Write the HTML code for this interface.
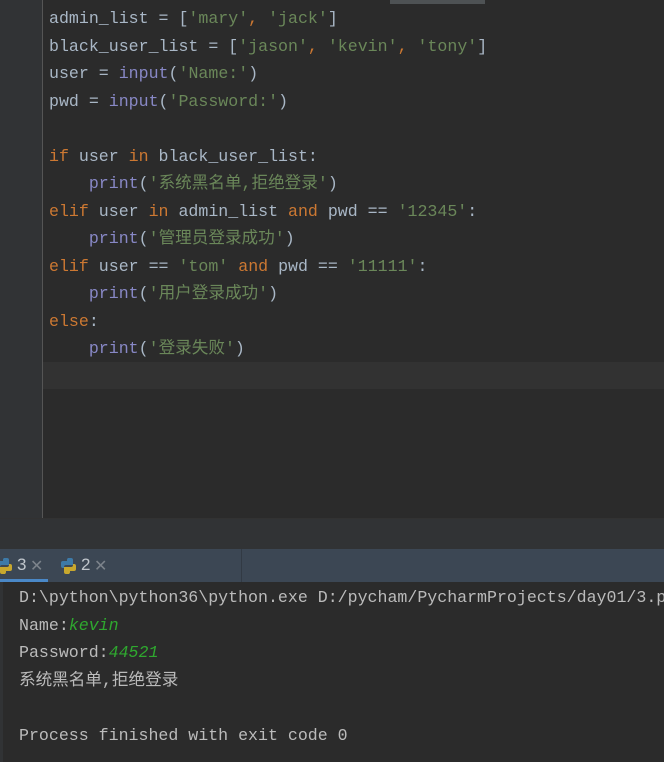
<!DOCTYPE html>
<html><head><meta charset="utf-8"><style>
body{margin:0;width:664px;height:762px;background:#2b2b2b;overflow:hidden;position:relative;font-family:"Liberation Mono","Noto Sans CJK SC",monospace;font-size:16.6px}
.gut{position:absolute;left:0;top:0;width:42px;height:518px;background:#313335;border-right:1px solid #555}
.thumb{position:absolute;left:390px;top:0;width:95px;height:4px;background:#4e5254}
.hl{position:absolute;left:43px;top:362px;width:621px;height:27px;background:#323232}
.code{position:absolute;left:49px;top:5px;color:#a9b7c6;white-space:pre;line-height:27.5px}
.k{color:#cc7832}.s{color:#6a8759}.b{color:#8888c6}
.strip{position:absolute;left:0;top:518px;width:664px;height:31px;background:#313335;border-top:1px solid #323232}
.tabs{position:absolute;left:0;top:549px;width:664px;height:33px;background:#3c4754}
.ul{position:absolute;left:0;top:579px;width:48px;height:3px;background:#4a88c7}
.sep{position:absolute;left:241px;top:549px;width:1px;height:33px;background:#323a44}
.tt{position:absolute;top:555px;color:#c0c6cc;font-family:"Liberation Sans",sans-serif;font-size:17px}
.x{position:absolute;top:556px;color:#7c838b;font-family:"Liberation Sans",sans-serif;font-size:16px}
.con{position:absolute;left:19px;top:584px;color:#bbbbbb;white-space:pre;line-height:27.5px}
.g{color:#2fa82f;font-style:italic}
.cg{position:absolute;left:0;top:582px;width:3px;height:180px;background:#313335}
</style></head><body>
<div class="gut"></div><div class="thumb"></div><div class="hl"></div>
<div class="code">admin_list = [<span class="s">'mary'</span><span class="k">, </span><span class="s">'jack'</span>]
black_user_list = [<span class="s">'jason'</span><span class="k">, </span><span class="s">'kevin'</span><span class="k">, </span><span class="s">'tony'</span>]
user = <span class="b">input</span>(<span class="s">'Name:'</span>)
pwd = <span class="b">input</span>(<span class="s">'Password:'</span>)

<span class="k">if</span> user <span class="k">in</span> black_user_list:
    <span class="b">print</span>(<span class="s">'系统黑名单,拒绝登录'</span>)
<span class="k">elif</span> user <span class="k">in</span> admin_list <span class="k">and</span> pwd == <span class="s">'12345'</span>:
    <span class="b">print</span>(<span class="s">'管理员登录成功'</span>)
<span class="k">elif</span> user == <span class="s">'tom'</span> <span class="k">and</span> pwd == <span class="s">'11111'</span>:
    <span class="b">print</span>(<span class="s">'用户登录成功'</span>)
<span class="k">else</span>:
    <span class="b">print</span>(<span class="s">'登录失败'</span>)</div>
<div class="strip"></div>
<div class="tabs"></div><div class="ul"></div><div class="sep"></div>
<svg style="position:absolute;left:-3px;top:557px" width="15" height="18" viewBox="0 0 15 18"><path d="M7 1h3a2 2 0 0 1 2 2v5H5a2 2 0 0 0-2 2v1H2a2 2 0 0 1-2-2V6a2 2 0 0 1 2-2h4V3a2 2 0 0 1 1-2z" fill="#3d7aa8"/><path d="M8 17H5a2 2 0 0 1-2-2v-5h7a2 2 0 0 0 2-2V7h1a2 2 0 0 1 2 2v3a2 2 0 0 1-2 2H9v1a2 2 0 0 1-1 2z" fill="#c8a82e"/></svg>
<svg style="position:absolute;left:61px;top:557px" width="15" height="18" viewBox="0 0 15 18"><path d="M7 1h3a2 2 0 0 1 2 2v5H5a2 2 0 0 0-2 2v1H2a2 2 0 0 1-2-2V6a2 2 0 0 1 2-2h4V3a2 2 0 0 1 1-2z" fill="#3d7aa8"/><path d="M8 17H5a2 2 0 0 1-2-2v-5h7a2 2 0 0 0 2-2V7h1a2 2 0 0 1 2 2v3a2 2 0 0 1-2 2H9v1a2 2 0 0 1-1 2z" fill="#c8a82e"/></svg>
<div class="tt" style="left:17px">3</div><div class="x" style="left:30px">✕</div>
<div class="tt" style="left:81px">2</div><div class="x" style="left:94px">✕</div>
<div class="cg"></div>
<div class="con">D:\python\python36\python.exe D:/pycham/PycharmProjects/day01/3.py
Name:<span class="g">kevin</span>
Password:<span class="g">44521</span>
系统黑名单,拒绝登录

Process finished with exit code 0</div>
</body></html>
